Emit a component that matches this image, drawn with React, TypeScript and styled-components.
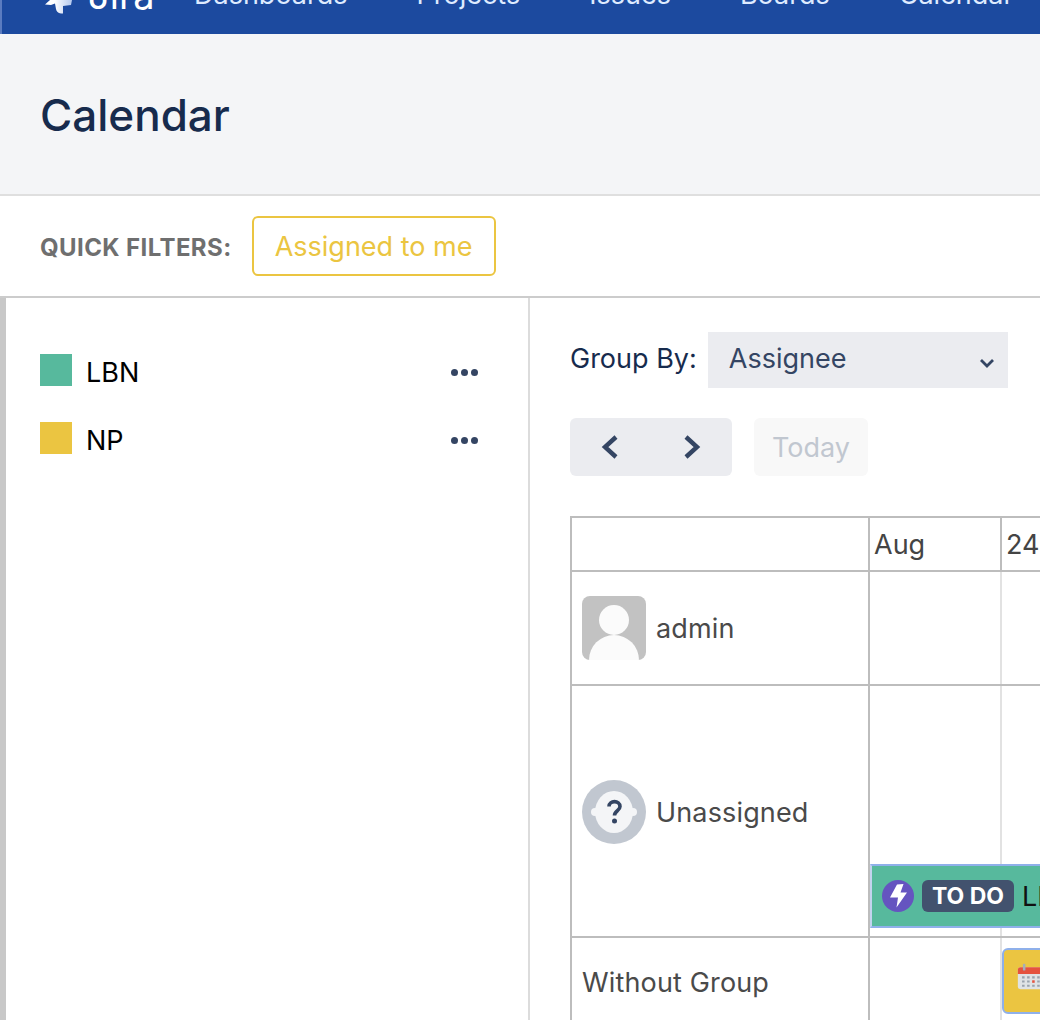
import React from "react";
import styled, { createGlobalStyle } from "styled-components";

const font = `Inter, "Liberation Sans", sans-serif`;

const GlobalStyle = createGlobalStyle`
  html, body {
    margin: 0;
    padding: 0;
    height: 1020px;
    overflow: hidden;
    background: #fff;
    font-family: ${font};
  }
`;

const NAV_ITEMS = ["Dashboards", "Projects", "Issues", "Boards", "Calendar"];

const App: React.FC = () => {
  return (
    <Page>
      <GlobalStyle />
      <TopBar>
        <Logo>
          <LogoMark width="28" height="14" viewBox="0 0 28 14">
            <defs>
              <linearGradient id="mark" x1="0" y1="0" x2="1" y2="0">
                <stop offset="0.35" stopColor="#ffffff" />
                <stop offset="1" stopColor="#b3c8ee" />
              </linearGradient>
            </defs>
            <path
              d="M5 0 L0 4.500 L6 5 L10 3.500 L11 9 C11.500 11.500 13 13 16 13.500 L18 13.500 L18 6 L26 5 L27 0 Z"
              fill="url(#mark)"
            />
          </LogoMark>
          <LogoText>Jira</LogoText>
        </Logo>
        {NAV_ITEMS.map((item) => (
          <NavItem key={item}>{item}</NavItem>
        ))}
      </TopBar>

      <PageHeader>
        <Title>Calendar</Title>
      </PageHeader>

      <FilterBar>
        <FilterLabel>QUICK FILTERS:</FilterLabel>
        <FilterButton>Assigned to me</FilterButton>
      </FilterBar>

      <Content>
        <Sidebar>
          <CalendarRow>
            <Swatch color="#57b99d" />
            <CalendarName>LBN</CalendarName>
            <Dots><i /><i /><i /></Dots>
          </CalendarRow>
          <CalendarRow>
            <Swatch color="#ebc541" />
            <CalendarName>NP</CalendarName>
            <Dots><i /><i /><i /></Dots>
          </CalendarRow>
        </Sidebar>

        <Main>
          <GroupRow>
            <GroupLabel>Group By:</GroupLabel>
            <Select>
              <span>Assignee</span>
              <SelectChevron width="16" height="10" viewBox="0 0 16 10">
                <path d="M2 2l6 6 6-6" fill="none" stroke="#344563" strokeWidth="2.800" />
              </SelectChevron>
            </Select>
          </GroupRow>

          <Toolbar>
            <ArrowGroup>
              <svg width="20" height="26" viewBox="0 0 20 26">
                <path d="M16 3L5 13l11 10" fill="none" stroke="#344563" strokeWidth="4.400" />
              </svg>
              <svg width="20" height="26" viewBox="0 0 20 26">
                <path d="M4 3l11 10-11 10" fill="none" stroke="#344563" strokeWidth="4.400" />
              </svg>
            </ArrowGroup>
            <TodayButton>Today</TodayButton>
          </Toolbar>

          <Table>
            <Row height={54}>
              <NameCell />
              <DayCell heading><HeadText>Aug</HeadText></DayCell>
              <DayCell heading><HeadText>24</HeadText></DayCell>
            </Row>
            <Row height={114}>
              <NameCell>
                <SquareAvatar>
                  <svg width="64" height="64" viewBox="0 0 64 64">
                    <circle cx="32" cy="24" r="15" fill="#fbfbfb" />
                    <ellipse cx="32" cy="64" rx="25" ry="25" fill="#fbfbfb" />
                  </svg>
                </SquareAvatar>
                <UserName>admin</UserName>
              </NameCell>
              <DayCell />
              <DayCell />
            </Row>
            <Row height={252}>
              <UnassignedCell>
                <RoundAvatar>
                  <svg width="64" height="64" viewBox="0 0 64 64">
                    <circle cx="32" cy="32" r="32" fill="#c1c7d0" />
                    <circle cx="13" cy="32" r="4" fill="#f4f5f7" />
                    <circle cx="51" cy="32" r="4" fill="#f4f5f7" />
                    <ellipse cx="32" cy="32" rx="19" ry="21" fill="#f4f5f7" />
                    <path d="M27 26.500c0-6.500 11-6.500 11 0 0 4.500-5.500 4-5.500 9" fill="none" stroke="#344563" strokeWidth="3.600" />
                    <circle cx="32.500" cy="41" r="2.500" fill="#344563" />
                  </svg>
                </RoundAvatar>
                <UserName>Unassigned</UserName>
              </UnassignedCell>
              <EventCell>
                <EventBar>
                  <EpicIcon>
                    <svg width="32" height="32" viewBox="0 0 32 32">
                      <circle cx="16" cy="16" r="16" fill="#6554c0" />
                      <path d="M15 4.500L21.500 4L18.500 12.500L25 12.500L14.500 27.500L16 17.500L8 17.500Z" fill="#fff" />
                    </svg>
                  </EpicIcon>
                  <StatusBadge>TO DO</StatusBadge>
                  <EventText>LBN-1</EventText>
                </EventBar>
              </EventCell>
              <DayCell />
            </Row>
            <Row height={90}>
              <NameCell><UserName>Without Group</UserName></NameCell>
              <DayCell />
              <DayCell>
                <TaskChip>
                  <svg width="32" height="27" viewBox="0 0 38 32">
                    <rect x="1" y="5" width="36" height="26" rx="3" fill="#dfe3e5" />
                    <path d="M1 8a3 3 0 0 1 3-3h30a3 3 0 0 1 3 3v5H1z" fill="#e5533f" />
                    <rect x="7" y="1" width="3" height="8" rx="1" fill="#a5adba" />
                    <rect x="28" y="1" width="3" height="8" rx="1" fill="#a5adba" />
                    <path d="M6 17h3M12 17h3M18 17h3M24 17h3M30 17h3M6 22h3M12 22h3M24 22h3M30 22h3M6 27h3M12 27h3M18 27h3M24 27h3M30 27h3" stroke="#9aa3ad" strokeWidth="2.500" />
                    <path d="M18 22h3" stroke="#e5533f" strokeWidth="3" />
                  </svg>
                </TaskChip>
              </DayCell>
            </Row>
          </Table>
        </Main>
      </Content>
    </Page>
  );
};

const Page = styled.div`
  width: 1040px;
  height: 1020px;
  overflow: hidden;
`;

const TopBar = styled.header`
  height: 34px;
  background: #1c4a9f;
  border-left: 2px solid #5b7cc0;
  box-sizing: border-box;
  display: flex;
  align-items: flex-end;
  overflow: hidden;
  padding-left: 43px;
`;

const Logo = styled.div`
  display: flex;
  align-items: flex-start;
  gap: 15px;
  width: 149px;
  height: 34px;
  flex: none;
`;

const LogoMark = styled.svg`
  display: block;
  flex: none;
`;

const LogoText = styled.span`
  font-size: 38px;
  line-height: 34px;
  color: #fff;
  margin-top: -22px;
`;

const NavItem = styled.span`
  font-size: 27px;
  line-height: 30px;
  color: #deebff;
  margin-right: 69px;
  padding-bottom: 24px;
  white-space: nowrap;
  flex: none;
`;

const PageHeader = styled.section`
  height: 160px;
  background: #f4f5f7;
  border-bottom: 2px solid #dfdfdf;
  display: flex;
  align-items: center;
  padding-left: 40px;
`;

const Title = styled.h1`
  margin: 0;
  padding-top: 2px;
  font-size: 44px;
  font-weight: 500;
  color: #172b4d;
`;

const FilterBar = styled.section`
  height: 100px;
  border-bottom: 2px solid #cccccc;
  display: flex;
  align-items: center;
  padding-left: 40px;
  gap: 20px;
`;

const FilterLabel = styled.span`
  font-size: 24px;
  font-weight: 700;
  letter-spacing: 0.4px;
  color: #6f6f6f;
  padding-top: 3px;
`;

const FilterButton = styled.button`
  width: 244px;
  height: 60px;
  box-sizing: border-box;
  border: 2px solid #ebc541;
  border-radius: 6px;
  background: #fff;
  color: #ebc541;
  font-family: ${font};
  font-size: 27px;
  padding: 0;
`;

const Content = styled.div`
  display: flex;
  height: 722px;
  border-left: 6px solid #c8c8c8;
`;

const Sidebar = styled.aside`
  width: 522px;
  flex: none;
  border-right: 2px solid #dcdcdc;
  padding-top: 56px;
  display: flex;
  flex-direction: column;
  gap: 36px;
`;

const CalendarRow = styled.div`
  display: flex;
  align-items: center;
  height: 32px;
  padding-left: 34px;
  padding-right: 50px;
`;

const Swatch = styled.span<{ color: string }>`
  width: 32px;
  height: 32px;
  background: ${({ color }) => color};
  flex: none;
`;

const CalendarName = styled.span`
  font-size: 27px;
  color: #000;
  margin-left: 14px;
  padding-top: 5px;
  flex: 1;
`;

const Dots = styled.span`
  display: flex;
  gap: 3px;
  padding-top: 4px;
  i {
    width: 7px;
    height: 7px;
    border-radius: 50%;
    background: #344563;
  }
`;

const Main = styled.main`
  flex: 1;
  min-width: 0;
  padding: 34px 0 0 40px;
  overflow: hidden;
`;

const GroupRow = styled.div`
  display: flex;
  align-items: center;
  gap: 11px;
`;

const GroupLabel = styled.span`
  font-size: 27px;
  color: #172b4d;
  margin-top: -3px;
`;

const Select = styled.div`
  width: 300px;
  height: 56px;
  box-sizing: border-box;
  background: #ebecf0;
  display: flex;
  align-items: center;
  justify-content: space-between;
  padding: 0 13px 3px 21px;
  font-size: 27px;
  color: #344563;
`;

const SelectChevron = styled.svg`
  margin-top: 9px;
`;

const Toolbar = styled.div`
  display: flex;
  gap: 22px;
  margin-top: 30px;
`;

const ArrowGroup = styled.div`
  width: 162px;
  height: 58px;
  border-radius: 6px;
  background: #ebecf0;
  display: flex;
  align-items: center;
  justify-content: center;
  gap: 62px;
`;

const TodayButton = styled.div`
  width: 114px;
  height: 58px;
  border-radius: 6px;
  background: #f8f8f8;
  color: #c1c7d0;
  font-size: 27px;
  display: flex;
  align-items: center;
  justify-content: center;
`;

const Table = styled.div`
  margin-top: 40px;
  border-top: 2px solid #bdbdbd;
  border-left: 2px solid #bdbdbd;
  width: 700px;
`;

const Row = styled.div<{ height: number }>`
  display: grid;
  grid-template-columns: 298px 132px 132px;
  height: ${({ height }) => height}px;
  box-sizing: border-box;
  border-bottom: 2px solid #bdbdbd;
`;

const NameCell = styled.div`
  border-right: 2px solid #bdbdbd;
  display: flex;
  align-items: center;
  padding-left: 10px;
  gap: 10px;
  min-width: 0;
`;

const UnassignedCell = styled(NameCell)`
  padding-top: 2px;
`;

const DayCell = styled.div<{ heading?: boolean }>`
  border-right: 2px solid ${({ heading }) => (heading ? "#bdbdbd" : "#e2e2e2")};
  min-width: 0;
  position: relative;
`;

const EventCell = styled(DayCell)`
  display: flex;
  align-items: flex-end;
  padding-bottom: 8px;
`;

const HeadText = styled.span`
  display: block;
  font-size: 27px;
  color: #444;
  padding: 10px 0 0 4px;
`;

const UserName = styled.span`
  font-size: 27px;
  letter-spacing: 0.15px;
  color: #4a4a4a;
  white-space: nowrap;
`;

const SquareAvatar = styled.span`
  width: 64px;
  height: 64px;
  border-radius: 8px;
  background: #c2c2c2;
  overflow: hidden;
  flex: none;
  svg { display: block; }
`;

const RoundAvatar = styled.span`
  width: 64px;
  height: 64px;
  flex: none;
  svg { display: block; }
`;

const EventBar = styled.div`
  position: relative;
  z-index: 1;
  flex: none;
  width: 400px;
  height: 64px;
  box-sizing: border-box;
  background: #57b99d;
  border: 2px solid #8fb0ea;
  border-left-color: #c3d3ef;
  border-right: none;
  display: flex;
  align-items: center;
  padding-left: 10px;
  gap: 8px;
`;

const EpicIcon = styled.span`
  width: 32px;
  height: 32px;
  flex: none;
  svg { display: block; }
`;

const StatusBadge = styled.span`
  height: 32px;
  width: 92px;
  flex: none;
  border-radius: 6px;
  background: #42526e;
  color: #fff;
  font-size: 23px;
  font-weight: 700;
  display: flex;
  align-items: center;
  justify-content: center;
`;

const EventText = styled.span`
  font-size: 27px;
  color: #111;
`;

const TaskChip = styled.div`
  position: absolute;
  z-index: 1;
  top: 10px;
  left: 0;
  width: 200px;
  height: 66px;
  box-sizing: border-box;
  background: #ebc541;
  border: 2px solid #8fb0ea;
  border-radius: 6px;
  display: flex;
  align-items: center;
  padding: 0 0 10px 13px;
`;

export default App;
